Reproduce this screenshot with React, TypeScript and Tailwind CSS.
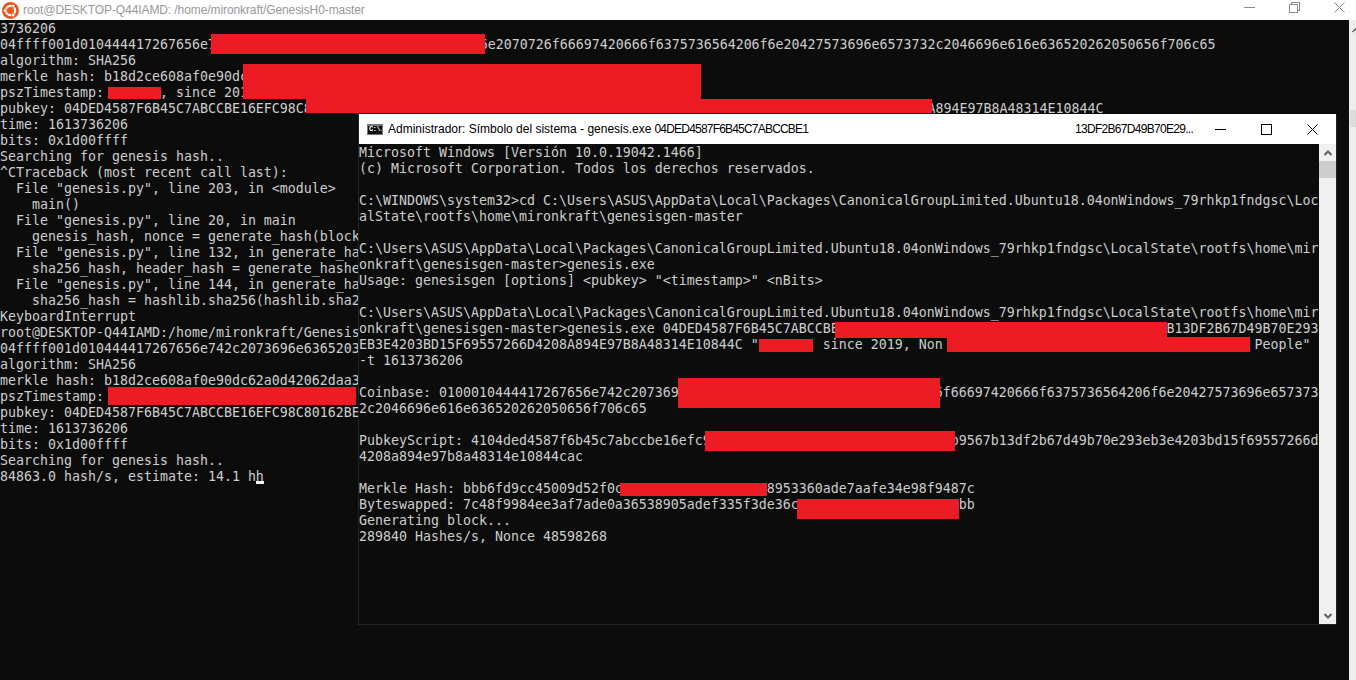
const ubuntuLines = [
  '3736206',
  '04ffff001d010444417267656e7'.padEnd(60) + '6e2070726f66697420666f6375736564206f6e20427573696e6573732c2046696e616e636520262050656f706c65',
  'algorithm: SHA256',
  'merkle hash: b18d2ce608af0e90dc',
  'pszTimestamp:       , since 201',
  'pubkey: 04DED4587F6B45C7ABCCBE16EFC98C8'.padEnd(116) + 'A894E97B8A48314E10844C',
  'time: 1613736206',
  'bits: 0x1d00ffff',
  'Searching for genesis hash..',
  '^CTraceback (most recent call last):',
  '  File "genesis.py", line 203, in <module>',
  '    main()',
  '  File "genesis.py", line 20, in main',
  '    genesis_hash, nonce = generate_hash(block',
  '  File "genesis.py", line 132, in generate_ha',
  '    sha256_hash, header_hash = generate_hashe',
  '  File "genesis.py", line 144, in generate_ha',
  '    sha256_hash = hashlib.sha256(hashlib.sha2',
  'KeyboardInterrupt',
  'root@DESKTOP-Q44IAMD:/home/mironkraft/Genesis',
  '04ffff001d010444417267656e742c2073696e6365203',
  'algorithm: SHA256',
  'merkle hash: b18d2ce608af0e90dc62a0d42062daa3',
  'pszTimestamp:',
  'pubkey: 04DED4587F6B45C7ABCCBE16EFC98C80162BE',
  'time: 1613736206',
  'bits: 0x1d00ffff',
  'Searching for genesis hash..',
  '84863.0 hash/s, estimate: 14.1 hh',
]

const packagesPath =
  'C:\\Users\\ASUS\\AppData\\Local\\Packages\\CanonicalGroupLimited.Ubuntu18.04onWindows_79rhkp1fndgsc\\LocalState\\rootfs\\home\\mir'

const cmdLines = [
  'Microsoft Windows [Versión 10.0.19042.1466]',
  '(c) Microsoft Corporation. Todos los derechos reservados.',
  '',
  'C:\\WINDOWS\\system32>cd C:\\Users\\ASUS\\AppData\\Local\\Packages\\CanonicalGroupLimited.Ubuntu18.04onWindows_79rhkp1fndgsc\\Loc',
  'alState\\rootfs\\home\\mironkraft\\genesisgen-master',
  '',
  packagesPath,
  'onkraft\\genesisgen-master>genesis.exe',
  'Usage: genesisgen [options] <pubkey> "<timestamp>" <nBits>',
  '',
  packagesPath,
  'onkraft\\genesisgen-master>genesis.exe 04DED4587F6B45C7ABCCBE'.padEnd(101) + 'B13DF2B67D49B70E293',
  'EB3E4203BD15F69557266D4208A894E97B8A48314E10844C "        since 2019, Non'.padEnd(112) + 'People"',
  '-t 1613736206',
  '',
  'Coinbase: 0100010444417267656e742c207369'.padEnd(72) + '6f66697420666f6375736564206f6e20427573696e657373',
  '2c2046696e616e636520262050656f706c65',
  '',
  'PubkeyScript: 4104ded4587f6b45c7abccbe16efc9'.padEnd(74) + 'b9567b13df2b67d49b70e293eb3e4203bd15f69557266d',
  '4208a894e97b8a48314e10844cac',
  '',
  'Merkle Hash: bbb6fd9cc45009d52f0c'.padEnd(51) + '8953360ade7aafe34e98f9487c',
  'Byteswapped: 7c48f9984ee3af7ade0a36538905adef335f3de36c'.padEnd(75) + 'bb',
  'Generating block...',
  '289840 Hashes/s, Nonce 48598268',
]

const monoText =
  "font-['DejaVu_Sans_Mono',monospace] text-[13.29px] leading-[16px] text-[#cccccc] whitespace-pre"

const titleText = "font-['Liberation_Sans',sans-serif] text-[12px] whitespace-pre"

function UbuntuLogo() {
  return (
    <svg width="17" height="17" viewBox="0 0 24 24" className="ml-[2px] shrink-0">
      <circle cx="12" cy="12" r="12" fill="#e95420" />
      <circle cx="12" cy="12" r="6.5" fill="none" stroke="#fff" strokeWidth="3" />
      <circle cx="4.4" cy="12" r="2.4" fill="#fff" stroke="#e95420" />
      <circle cx="15.8" cy="5.4" r="2.4" fill="#fff" stroke="#e95420" />
      <circle cx="15.8" cy="18.6" r="2.4" fill="#fff" stroke="#e95420" />
    </svg>
  )
}

function CmdIcon() {
  return (
    <div className="w-[16px] h-[11px] bg-[#111111] border border-[#777777] border-t-2 flex items-center overflow-hidden">
      <span className="font-['Liberation_Mono',monospace] text-[7px] leading-none font-bold text-white ml-[1px] tracking-[-0.5px]">
        C:\.
      </span>
    </div>
  )
}

function MinIcon() {
  return (
    <svg width="11" height="11" viewBox="0 0 11 11" shapeRendering="crispEdges">
      <path d="M0 5.5H11" stroke="currentColor" />
    </svg>
  )
}

function MaxIcon() {
  return (
    <svg width="11" height="11" viewBox="0 0 11 11" shapeRendering="crispEdges">
      <rect x="0.5" y="0.5" width="10" height="10" fill="none" stroke="currentColor" />
    </svg>
  )
}

function RestoreIcon() {
  return (
    <svg width="11" height="11" viewBox="0 0 11 11" shapeRendering="crispEdges">
      <rect x="0.5" y="2.5" width="8" height="8" fill="none" stroke="currentColor" />
      <path d="M2.5 2.5V0.5H10.5V8.5H8.5" fill="none" stroke="currentColor" />
    </svg>
  )
}

function CloseIcon() {
  return (
    <svg width="11" height="11" viewBox="0 0 11 11">
      <path d="M0.5 0.5L10.5 10.5M10.5 0.5L0.5 10.5" fill="none" stroke="currentColor" />
    </svg>
  )
}

export default function App() {
  return (
    <div className="relative w-[1356px] h-[680px] overflow-hidden bg-[#0c0c0c]">
      {/* ubuntu window */}
      <div className="h-[20px] bg-white flex items-center">
        <UbuntuLogo />
        <span className={`ml-[4px] text-[#999999] tracking-[-0.09px] ${titleText}`}>
          root@DESKTOP-Q44IAMD: /home/mironkraft/GenesisH0-master
        </span>
        <div className="ml-auto pr-[11px] pb-[5px] flex items-center gap-[34px] text-[#8c8c8c]">
          <MinIcon />
          <RestoreIcon />
          <CloseIcon />
        </div>
      </div>
      <div className="flex h-[660px]">
        <div className={`flex-1 overflow-hidden pt-[1px] ${monoText}`}>
          {ubuntuLines.map((line, i) => (
            <div key={i} className="h-[16px]">
              {line}
            </div>
          ))}
        </div>
        <div className="w-[7px] bg-[#eeeeee] flex flex-col items-end">
          <svg width="4" height="6" viewBox="0 0 4 6" className="mt-[7px] mb-[77px]">
            <path d="M0.5 5 L4 1.5" fill="none" stroke="#606060" strokeWidth="1.5" />
          </svg>
          <div className="w-[6px] h-[17px] bg-[#dcdcdc]" />
        </div>
      </div>

      {/* cursor */}
      <div className="absolute left-[256px] top-[481px] w-[8px] h-[3px] bg-[#f2f2f2]" />

      {/* redactions on the ubuntu window */}
      <div className="absolute left-[211px] top-[34px] w-[274px] h-[20px] bg-[#ed1c24]" />
      <div className="absolute left-[243px] top-[64px] w-[458px] h-[35px] bg-[#ed1c24]" />
      <div className="absolute left-[108px] top-[87px] w-[53px] h-[12px] bg-[#ed1c24]" />
      <div className="absolute left-[306px] top-[99px] w-[626px] h-[14px] bg-[#ed1c24]" />
      <div className="absolute left-[108px] top-[387px] w-[248px] h-[18px] bg-[#ed1c24]" />

      {/* cmd window */}
      <div className="absolute left-[358px] top-[114px] w-[979px] h-[511px] flex flex-col bg-[#0c0c0c] border-l border-b border-r border-[#222222]">
        <div className="h-[30px] bg-white flex items-center shrink-0">
          <div className="ml-[8px]">
            <CmdIcon />
          </div>
          <span className={`ml-[5px] text-black ${titleText}`}>
            Administrador: Símbolo del sistema - genesis.exe
          </span>
          <span className={`ml-[3px] text-black tracking-[-0.8px] ${titleText}`}>04DED4587F6B45C7ABCCBE1</span>
          <span className={`absolute left-[716px] text-black tracking-[-0.7px] ${titleText}`}>13DF2B67D49B70E29...</span>
          <div className="ml-auto pr-[18px] flex items-center gap-[35px] text-black">
            <MinIcon />
            <MaxIcon />
            <CloseIcon />
          </div>
        </div>
        <div className="flex flex-1 min-h-0">
          <div className={`flex-1 overflow-hidden pt-[1px] ${monoText}`}>
            {cmdLines.map((line, i) => (
              <div key={i} className="h-[16px]">
                {line}
              </div>
            ))}
          </div>
          <div className="w-[17px] bg-[#f0f0f0] flex flex-col items-center justify-between">
            <div className="w-full">
              <div className="h-[17px] flex items-center justify-center">
                <svg width="8" height="6" viewBox="0 0 8 6">
                  <path d="M0.5 5 L4 1.5 L7.5 5" fill="none" stroke="#606060" strokeWidth="2" />
                </svg>
              </div>
              <div className="h-[17px] bg-[#cdcdcd]" />
            </div>
            <div className="h-[17px] flex items-center justify-center">
              <svg width="8" height="6" viewBox="0 0 8 6">
                <path d="M0.5 1 L4 4.5 L7.5 1" fill="none" stroke="#606060" strokeWidth="2" />
              </svg>
            </div>
          </div>
        </div>
      </div>

      {/* redactions on the cmd window */}
      <div className="absolute left-[835px] top-[322px] w-[332px] h-[16px] bg-[#ed1c24]" />
      <div className="absolute left-[759px] top-[339px] w-[54px] h-[13px] bg-[#ed1c24]" />
      <div className="absolute left-[947px] top-[337px] w-[303px] h-[15px] bg-[#ed1c24]" />
      <div className="absolute left-[678px] top-[378px] w-[262px] h-[30px] bg-[#ed1c24]" />
      <div className="absolute left-[705px] top-[431px] w-[250px] h-[20px] bg-[#ed1c24]" />
      <div className="absolute left-[620px] top-[483px] w-[147px] h-[13px] bg-[#ed1c24]" />
      <div className="absolute left-[797px] top-[499px] w-[162px] h-[20px] bg-[#ed1c24]" />
    </div>
  )
}
